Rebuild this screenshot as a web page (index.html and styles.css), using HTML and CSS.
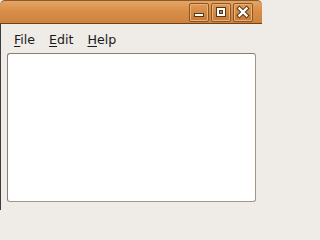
FILE: index.html
```html
<!DOCTYPE html>
<html>
<head>
<meta charset="utf-8">
<link rel="stylesheet" href="styles.css">
</head>
<body>
<div class="window">
  <div class="titlebar">
    <div class="buttons">
      <div class="wbtn">
        <svg width="18" height="17" viewBox="0 0 18 17"><rect x="4.5" y="9.5" width="9" height="3" fill="#fff" stroke="#5a3412" stroke-width="1"/></svg>
      </div>
      <div class="wbtn">
        <svg width="18" height="17" viewBox="0 0 18 17"><rect x="4" y="3" width="10" height="10" fill="#5a3412"/><rect x="5" y="4" width="8" height="8" fill="#fff"/><rect x="7.5" y="6.5" width="3" height="3" fill="#c9823f" stroke="#5a3412" stroke-width="1"/></svg>
      </div>
      <div class="wbtn">
        <svg width="18" height="17" viewBox="0 0 18 17"><path d="M5.5 4.5 L12.5 11.5 M12.5 4.5 L5.5 11.5" stroke="#5a3412" stroke-width="4.4" stroke-linecap="square"/><path d="M5.5 4.5 L12.5 11.5 M12.5 4.5 L5.5 11.5" stroke="#fff" stroke-width="2.4" stroke-linecap="square"/></svg>
      </div>
    </div>
  </div>
  <div class="client">
    <div class="menubar">
      <span class="item"><u>F</u>ile</span>
      <span class="item"><u>E</u>dit</span>
      <span class="item"><u>H</u>elp</span>
    </div>
    <div class="content"></div>
  </div>
</div>
</body>
</html>
```
FILE: styles.css
```css
html, body {
  margin: 0;
  padding: 0;
  background: #efebe7;
}
.window {
  width: 262px;
  height: 210px;
  display: flex;
  flex-direction: column;
  box-sizing: border-box;
  background: #efebe7;
  font-family: "DejaVu Sans", sans-serif;
  font-size: 12.6px;
  color: #1a1a1a;
}
.titlebar {
  height: 24px;
  box-sizing: border-box;
  border-top: 1px solid #8a5a2c;
  border-bottom: 1px solid #6e4318;
  border-radius: 5px 5px 0 0;
  background: linear-gradient(#e4a563, #d98e48 45%, #ce8240);
  display: flex;
  justify-content: flex-end;
  align-items: center;
  padding-right: 9px;
}
.buttons {
  display: flex;
  gap: 2px;
}
.wbtn {
  width: 20px;
  height: 19px;
  box-sizing: border-box;
  border: 1px solid #8b5420;
  border-radius: 2px;
  box-shadow: inset 0 0 0 1px #eab27a;
  background: linear-gradient(#dd9a56, #c77a35);
  display: flex;
  align-items: center;
  justify-content: center;
}
.wbtn svg {
  display: block;
}
.client {
  flex: 1;
  display: flex;
  flex-direction: column;
  border-left: 1px solid #3c3c3c;
  padding: 0 6px 8px 6px;
}
.menubar {
  height: 29px;
  display: flex;
  align-items: center;
  padding-top: 1px;
  box-sizing: border-box;
}
.item {
  padding: 0 7px;
}
.item u {
  text-decoration-thickness: 1px;
  text-underline-offset: 2px;
}
.content {
  flex: 1;
  background: #fff;
  border: 1px solid #a49686;
  border-top-color: #8c7e70;
  border-left-color: #8c7e70;
  border-radius: 3px;
}
```
